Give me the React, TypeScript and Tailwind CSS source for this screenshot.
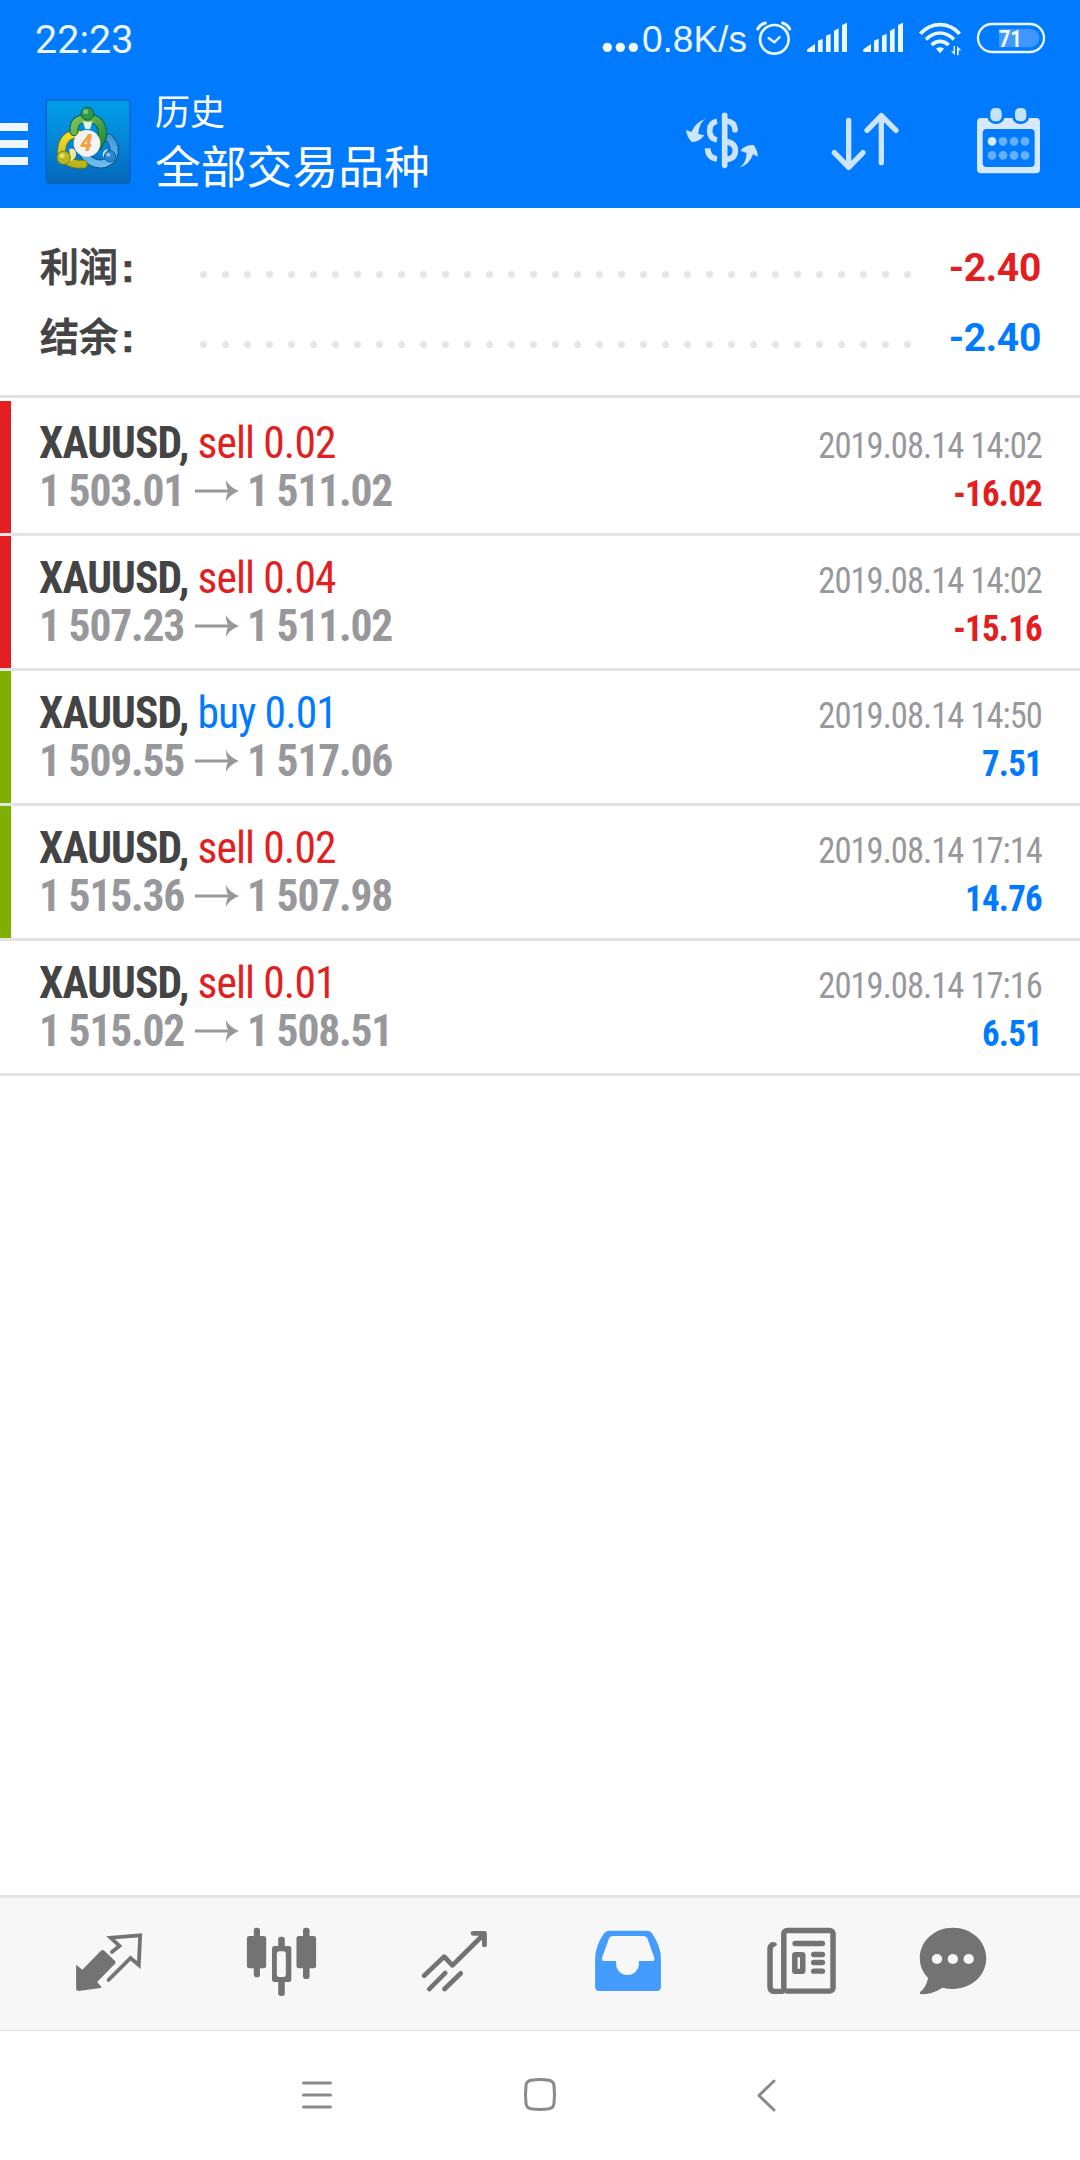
import React from "react";

type Deal = {
  side: "sell" | "buy";
  volume: string;
  open: string;
  close: string;
  time: string;
  profit: string;
  bar: string;
};

const deals: Deal[] = [
  { side: "sell", volume: "0.02", open: "1 503.01", close: "1 511.02", time: "2019.08.14 14:02", profit: "-16.02", bar: "bg-[#e31e20]" },
  { side: "sell", volume: "0.04", open: "1 507.23", close: "1 511.02", time: "2019.08.14 14:02", profit: "-15.16", bar: "bg-[#e31e20]" },
  { side: "buy", volume: "0.01", open: "1 509.55", close: "1 517.06", time: "2019.08.14 14:50", profit: "7.51", bar: "bg-[#7fb000]" },
  { side: "sell", volume: "0.02", open: "1 515.36", close: "1 507.98", time: "2019.08.14 17:14", profit: "14.76", bar: "bg-[#7fb000]" },
  { side: "sell", volume: "0.01", open: "1 515.02", close: "1 508.51", time: "2019.08.14 17:16", profit: "6.51", bar: "bg-transparent" },
];

function Signal() {
  return (
    <svg className="h-[76px] w-[46px] shrink-0" viewBox="672 0 138 228" fill="#eaf5ff">
      <path d="M705 132v24h-21q-6-3-1-9zM714 122l14-6v40h-14zM738 107l14-6v55h-14zM762 92l14-7v71h-14zM786 75l15-7v88h-15z" />
    </svg>
  );
}

function StatusBar() {
  return (
    <div className="flex h-[76px] items-center text-[#eaf5ff]">
      <div className="ml-[35px] h-[48px] w-[110px] whitespace-nowrap font-['Roboto',sans-serif] text-[39.5px] font-[380] leading-[52px]">22:23</div>
      <svg className="ml-[457px] h-[76px] w-[38px] shrink-0" viewBox="66 0 114 228" fill="#f2f9ff">
        <circle cx="82" cy="142" r="14" />
        <circle cx="121" cy="142" r="14" />
        <circle cx="160" cy="142" r="14" />
      </svg>
      <div className="ml-[2px] h-[48px] w-[112px] whitespace-nowrap font-['Liberation_Sans',sans-serif] text-[37px] leading-[52px]">0.8K/s</div>
      <svg className="h-[76px] w-[40px] shrink-0" viewBox="522 0 120 228" fill="none" stroke="#eaf5ff" strokeWidth="8" strokeLinecap="round" strokeLinejoin="round">
        <circle cx="583" cy="118" r="43" />
        <path d="M566 114l17 13 16-16" strokeWidth="7" />
        <path d="M533 87q7-13 23-18M608 69q15 5 21 18" strokeWidth="9" />
      </svg>
      <div className="ml-[10px] flex gap-[10px]">
        <Signal />
        <Signal />
      </div>
      <svg className="ml-[10px] h-[76px] w-[50px] shrink-0" viewBox="1008 0 150 228" fill="none" stroke="#eaf5ff" strokeWidth="11">
        <path d="M1021 101Q1047 74 1080 74T1139 101" />
        <path d="M1038 118Q1058 99 1080 99T1122 118" />
        <path d="M1055 135Q1066 124 1080 124T1106 135" />
        <path d="M1068 146q12-8 24 0l-12 14z" fill="#eaf5ff" stroke="none" />
        <path d="M1125 138v28l-12-12h8v-16zM1131 166v-28l13 13h-8v15z" fill="#eaf5ff" stroke="none" />
      </svg>
      <svg className="ml-[8px] h-[76px] w-[76px] shrink-0" viewBox="1182 0 228 228">
        <path d="M1257 86h92a28 27 0 0 1 0 56h-92z" fill="#3f97ff" />
        <rect x="1194" y="72" width="198" height="84" rx="42" fill="none" stroke="#eaf5ff" strokeWidth="7" />
        <text x="1256" y="141" className="font-['Roboto',sans-serif] text-[72px] font-bold" fill="#f4faff" textLength="70" lengthAdjust="spacingAndGlyphs">71</text>
      </svg>
    </div>
  );
}

function Logo() {
  return (
    <svg className="ml-[17px] mt-[23px] h-[85px] w-[87px] shrink-0" viewBox="3 6 261 255" preserveAspectRatio="none">
      <defs>
        <linearGradient id="tile" x1="0" y1="0" x2="0" y2="1">
          <stop offset="0" stopColor="#009fe8" />
          <stop offset="0.5" stopColor="#0585d6" />
          <stop offset="1" stopColor="#0467b8" />
        </linearGradient>
        <linearGradient id="green" x1="0" y1="0" x2="1" y2="1">
          <stop offset="0" stopColor="#7cc45c" />
          <stop offset="1" stopColor="#1f8a38" />
        </linearGradient>
        <linearGradient id="yellow" x1="0" y1="0" x2="0" y2="1">
          <stop offset="0" stopColor="#f7e02c" />
          <stop offset="1" stopColor="#b9b41e" />
        </linearGradient>
        <linearGradient id="sky" x1="0" y1="0" x2="0" y2="1">
          <stop offset="0" stopColor="#3f9bdc" />
          <stop offset="1" stopColor="#6dbcee" />
        </linearGradient>
      </defs>
      <rect x="7" y="9" width="251" height="250" rx="10" fill="url(#tile)" stroke="#0862be" strokeWidth="4" />
      <g fill="none" strokeLinecap="round">
        <path d="M196 124Q220 152 206 182 186 208 152 198 128 188 116 166" stroke="#0f5794" strokeWidth="27" />
        <path d="M196 124Q220 152 206 182 186 208 152 198 128 188 116 166" stroke="url(#sky)" strokeWidth="21" />
        <path d="M104 112Q56 108 52 164 64 204 118 202" stroke="#6b7a1c" strokeWidth="27" />
        <path d="M104 112Q56 108 52 164 64 204 118 202" stroke="url(#yellow)" strokeWidth="21" />
        <path d="M90 104Q88 70 116 66H146Q176 72 176 118L162 146" stroke="#0e6336" strokeWidth="27" />
        <path d="M90 104Q88 70 116 66H146Q176 72 176 118L162 146" stroke="url(#green)" strokeWidth="21" />
      </g>
      <path d="M116 72q15 6 30 0l-8 24h-14z" fill="#e4f6df" />
      <path d="M76 156q16-6 20 12 2 18-18 24z" fill="#eeea96" />
      <path d="M190 156q-14 4-14 18 4 14 16 16z" fill="#cdeaff" />
      <circle cx="130" cy="50" r="19" fill="#31974a" stroke="#0e6336" strokeWidth="3" />
      <ellipse cx="125" cy="44" rx="8" ry="7" fill="#6cc67a" />
      <circle cx="59" cy="182" r="20" fill="#b9b91f" stroke="#718323" strokeWidth="3" />
      <ellipse cx="54" cy="176" rx="8" ry="7" fill="#e2df5e" />
      <circle cx="198" cy="178" r="17" fill="#2a86cd" stroke="#115d9c" strokeWidth="3" />
      <ellipse cx="193" cy="173" rx="7" ry="6" fill="#7cc6f2" />
      <circle cx="129" cy="139" r="40" fill="#f5f2f6" />
      <text x="127" y="163" textAnchor="middle" className="font-['Roboto_Condensed','Roboto',sans-serif] text-[74px] font-bold italic" fill="#f2a03a">4</text>
    </svg>
  );
}

function TitleBar() {
  return (
    <div className="flex h-[132px]">
      <div className="mt-[47px] flex w-[28px] shrink-0 flex-col gap-[9px]">
        <div className="h-[8px] bg-[#eef7ff]" />
        <div className="h-[8px] bg-[#eef7ff]" />
        <div className="h-[8px] bg-[#eef7ff]" />
      </div>
      <Logo />
      <div className="ml-[23px] w-[525px] whitespace-nowrap font-['Noto_Sans_CJK_SC',sans-serif] font-normal text-white">
        <div className="mt-[11px] text-[35px] leading-[46px]">历史</div>
        <div className="mt-[3px] text-[45.800px] leading-[56px]">全部交易品种</div>
      </div>
      <svg className="h-[132px] w-[84px] shrink-0" viewBox="300 228 252 396">
        <g fill="none" stroke="#cce4ff" strokeWidth="17">
          <path d="M434 346v150" strokeLinecap="round" />
          <path d="M411 364q-22 4-22 28t22 28" />
          <path d="M383 445q0 28 28 32" />
          <path d="M438 363q26 2 27 26" />
          <circle cx="465" cy="389" r="8.500" fill="#cce4ff" stroke="none" />
          <path d="M438 425q28 4 28 27 0 24-28 26" />
        </g>
        <path d="M377 357q-20 10-22 45l18 4q-16 22-38 20-14-14-17-36l16 6q14-32 43-39zM478 502q20-10 22-43l-19-7q14-18 40-17 11 14 13 35l-15-7q-12 34-41 39z" fill="#cce4ff" />
      </svg>
      <svg className="ml-[62px] h-[132px] w-[78px] shrink-0" viewBox="738 228 234 396" fill="none" stroke="#cce4ff" strokeWidth="16" strokeLinecap="round" strokeLinejoin="round">
        <path d="M806 361v141M763 458l43 44 43-44M904 488V347M861 391l43-44 44 44" />
      </svg>
      <svg className="ml-[68px] h-[132px] w-[72px] shrink-0" viewBox="1176 228 216 396">
        <path fillRule="evenodd" fill="#d6e9ff" d="M1203 354H1368q12 0 12 12V508q0 12-12 12H1203q-12 0-12-12V366q0-12 12-12zM1220 387q-12 0-12 12v90q0 12 12 12h132q12 0 12-12v-90q0-12-12-12z" />
        <g fill="#c4e3fd" stroke="#007aff" strokeWidth="8">
          <rect x="1227" y="320" width="42" height="48" rx="18" />
          <rect x="1301" y="320" width="42" height="48" rx="18" />
        </g>
        <circle cx="1236" cy="424" r="13" fill="#d6e9ff" />
        <g fill="#66b0ff">
          <circle cx="1269" cy="424" r="13" />
          <circle cx="1302" cy="424" r="13" />
          <circle cx="1335" cy="424" r="13" />
          <circle cx="1236" cy="466" r="13" />
          <circle cx="1269" cy="466" r="13" />
          <circle cx="1302" cy="466" r="13" />
          <circle cx="1335" cy="466" r="13" />
        </g>
      </svg>
    </div>
  );
}

function SummaryRow({ label, value, color }: { label: string; value: string; color: string }) {
  return (
    <div className="flex h-[70px] font-['Roboto','Noto_Sans_CJK_SC',sans-serif] text-[39px] font-bold leading-[70px]">
      <div className="flex w-[160px] text-[#444444]">
        <span className="font-medium [-webkit-text-stroke:0.9px_#444444]">{label}</span>
        <span className="ml-[3px] font-['Liberation_Sans',sans-serif] text-[41px] [-webkit-text-stroke:0.6px_#444444]">:</span>
      </div>
      <div className="flex h-[7px] w-[711px] justify-between pt-[38px]">
        {Array.from({ length: 33 }, (_, i) => (
          <span key={i} className="size-[7px] rounded-full bg-[#e5e5e7]" />
        ))}
      </div>
      <div className={`flex-1 text-right tracking-[-0.3px] ${color}`}>{value}</div>
    </div>
  );
}

function DealRow({ deal }: { deal: Deal }) {
  return (
    <div className="flex h-[135px] border-b-[3px] border-[#e3e3e3] font-['Roboto_Condensed','Roboto',sans-serif] [font-stretch:75%]">
      <div className={`w-[11px] ${deal.bar}`} />
      <div className="flex-1 whitespace-nowrap pl-[28px] pt-[19px] text-[43.500px] leading-[48px]">
        <div className="tracking-[-0.900px]">
          <span className="font-bold text-[#444444]">XAUUSD, </span>
          <span className={deal.side === "sell" ? "text-[#e31e20]" : "text-[#007aff]"}>
            {deal.side} {deal.volume}
          </span>
        </div>
        <div className="flex font-bold tracking-[-1.200px] text-[#98989c]">
          <span className="w-[155px]">{deal.open}</span>
          <svg className="mt-[3px] h-[40px] w-[46px] shrink-0" viewBox="0 0 46 40">
            <path d="M1 20h36" fill="none" stroke="#98989c" strokeWidth="2.800" />
            <path d="M32 9q3 7 13 11-10 4-13 11 0-8 3-11-3-3-3-11z" fill="#98989c" />
          </svg>
          <span className="ml-[7px]">{deal.close}</span>
        </div>
      </div>
      <div className="whitespace-nowrap pr-[38px] pt-[21px] text-right text-[36px] leading-[48px]">
        <div className="origin-right scale-x-[0.96] tracking-[-1px] text-[#98989c]">{deal.time}</div>
        <div className={`origin-right scale-x-[0.97] font-bold tracking-[-0.800px] ${deal.profit.startsWith("-") ? "text-[#e31e20]" : "text-[#007aff]"}`}>{deal.profit}</div>
      </div>
    </div>
  );
}

function Tab({ x, width, children }: { x: number; width: string; children: React.ReactNode }) {
  return (
    <div className={`flex justify-center pt-[28px] ${width}`}>
      <svg className="h-[72px] w-[73px]" viewBox={`${x} 138 212 216`} preserveAspectRatio="none">
        {children}
      </svg>
    </div>
  );
}

function TabBar() {
  return (
    <div className="flex h-[136px] border-b border-t-[3px] border-b-[#dedede] border-t-[#e4e4e4] bg-[#f7f7f7] pl-[22px]">
      <Tab x={209} width="w-[173px]">
        <path d="M221 254l18 15 54-57q5-4 10 0l31 31q3 3 0 8l-52 55 12 14q2 4-3 4l-62 9q-8 0-8-8z" fill="#737373" />
        <path d="M325 216l22-18-26-25 86-7-4 89-24-21-64 66" fill="none" stroke="#737373" strokeWidth="11" strokeLinecap="round" />
      </Tab>
      <Tab x={711.5} width="w-[173px]">
        <g fill="#737373">
          <rect x="717" y="168" width="56" height="97" rx="7" />
          <rect x="737" y="143" width="18" height="149" rx="8" />
          <rect x="861" y="168" width="57" height="97" rx="7" />
          <rect x="880" y="143" width="19" height="154" rx="8" />
          <rect x="790" y="198" width="56" height="108" rx="7" />
          <rect x="808" y="170" width="19" height="178" rx="8" />
        </g>
        <rect x="804" y="214" width="26" height="77" rx="7" fill="#f7f7f7" />
      </Tab>
      <Tab x={1214} width="w-[173px]">
        <path d="M1232 287l58-57 24 26 92-94M1374 160h33v35M1247 327l46-48M1291 327l47-47" fill="none" stroke="#737373" strokeWidth="14" strokeLinecap="round" strokeLinejoin="round" />
      </Tab>
      <Tab x={148} width="w-[173px]">
        <path fill="#449cff" fillRule="evenodd" d="M200 152H312q9 0 14 9 25 37 25 76v84q0 12-12 12H172q-12 0-12-12v-84q0-39 25-76 6-9 15-9zM213 168q-10 0-13 8l-20 57q-2 10 7 10h34v9a33 33 0 0 0 66 0v-9h38q9 0 7-10l-20-57q-3-8-13-8z" />
      </Tab>
      <Tab x={650.5} width="w-[173px]">
        <g fill="none" stroke="#737373" strokeWidth="16">
          <rect x="708" y="151.500" width="143" height="182" rx="10" />
          <path d="M708 334h-26q-14 0-14-14V208q0-12 10-15" />
          <path d="M678 193h3" strokeLinecap="round" strokeWidth="13" />
          <path d="M741 190.500h79M795 223.500h25M795 247.500h25M795 273.500h25" strokeLinecap="round" />
          <rect x="740" y="224" width="23" height="50" rx="2" />
        </g>
      </Tab>
      <Tab x={1092} width="w-[131px]">
        <path d="M1199 143c54 0 97 40 97 92s-43 92-97 92q-16 0-30-4-30 20-62 20-6-3-2-8 17-13 22-41-24-25-24-59c0-52 43-92 96-92z" fill="#737373" />
        <g fill="#f7f7f7">
          <circle cx="1153" cy="237" r="15" />
          <circle cx="1199" cy="237" r="15" />
          <circle cx="1245" cy="237" r="15" />
        </g>
      </Tab>
    </div>
  );
}

function NavBar() {
  return (
    <div className="flex h-[129px] items-center pl-[297px]">
      <svg className="h-[40px] w-[40px]" viewBox="0 0 40 40" fill="none" stroke="#8a8a8a" strokeWidth="3" strokeLinecap="round">
        <path d="M6.500 7h27M6.500 19h27M6.500 31h27" />
      </svg>
      <svg className="ml-[183px] h-[40px] w-[40px]" viewBox="0 0 40 40" fill="none" stroke="#8a8a8a" strokeWidth="3">
        <path d="M11 4.200Q20 3 29 4.200 33.500 5 34 9.500 35 18.500 34 27.500 33.500 32 29 32.800 20 34 11 32.800 6.500 32 6 27.500 5 18.500 6 9.500 6.500 5 11 4.200z" />
      </svg>
      <svg className="ml-[187px] h-[40px] w-[40px]" viewBox="0 0 40 40" fill="none" stroke="#8a8a8a" strokeWidth="3" strokeLinecap="round" strokeLinejoin="round">
        <path d="M27 5L12 19.500 27 34" />
      </svg>
    </div>
  );
}

export default function App() {
  return (
    <div className="flex h-[2160px] w-[1080px] flex-col overflow-hidden bg-white">
      <header className="h-[208px] shrink-0 bg-[#007aff]">
        <StatusBar />
        <TitleBar />
      </header>
      <section className="h-[190px] shrink-0 border-b-[3px] border-[#e3e3e3] pl-[40px] pr-[39px] pt-[25px]">
        <SummaryRow label="利润" value="-2.40" color="text-[#e31e20]" />
        <SummaryRow label="结余" value="-2.40" color="text-[#007aff]" />
      </section>
      <main className="flex-1 pt-[3px]">
        {deals.map((deal, i) => (
          <DealRow key={i} deal={deal} />
        ))}
      </main>
      <TabBar />
      <NavBar />
    </div>
  );
}
